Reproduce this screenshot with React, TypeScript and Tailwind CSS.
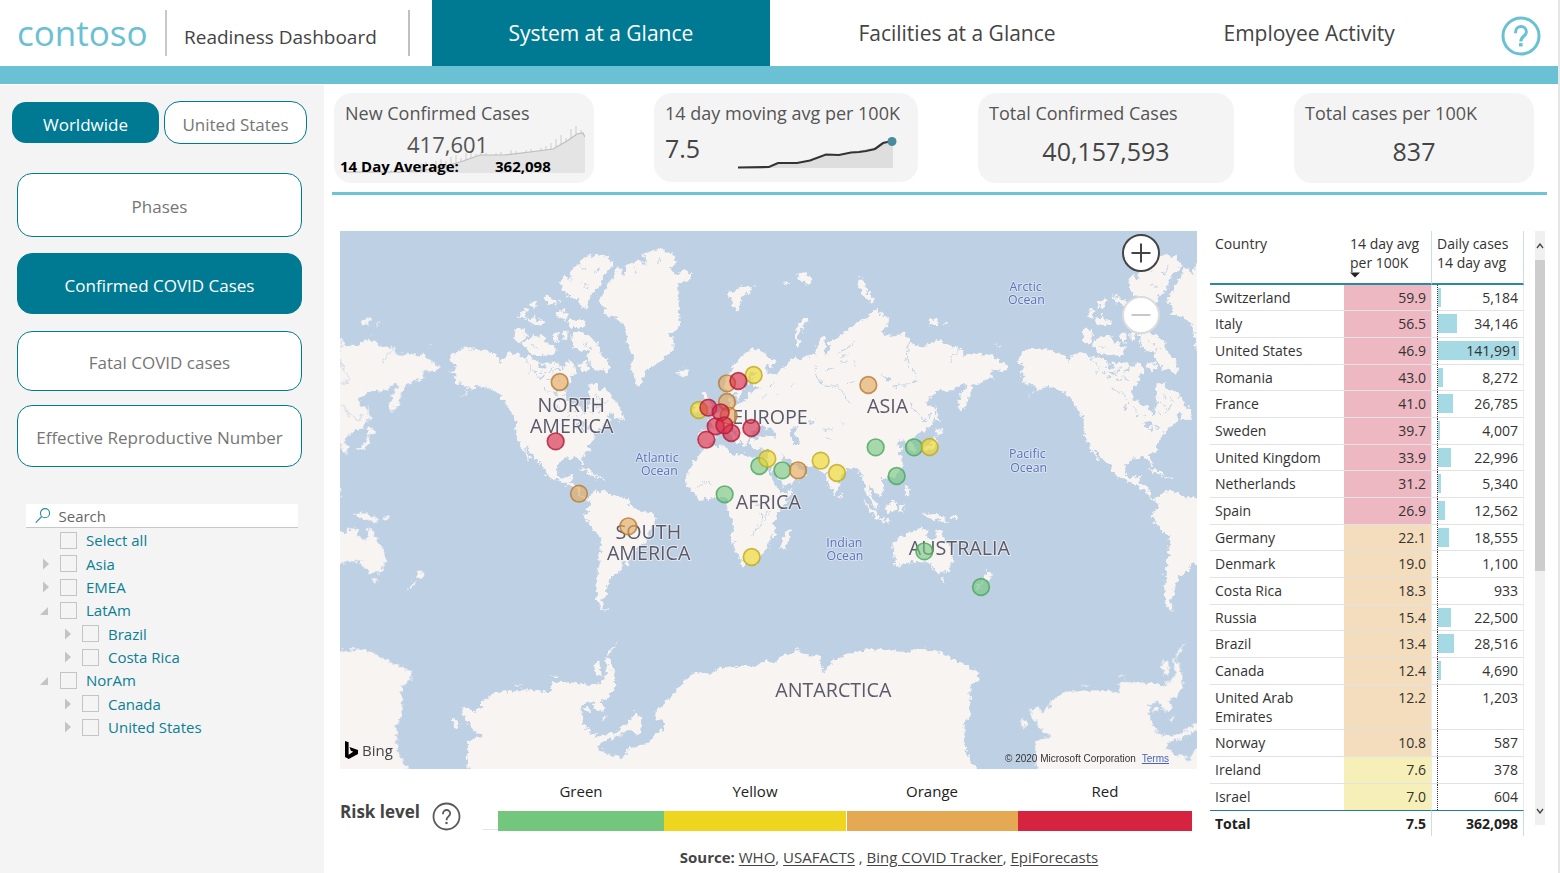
import React, { useState } from "react";

const NAV = [
  { label: "System at a Glance", grow: "flex-[338]" },
  { label: "Facilities at a Glance", grow: "flex-[375]" },
  { label: "Employee Activity", grow: "flex-[330]" },
];

const METRICS = [
  { label: "Phases", height: "h-[64px]" },
  { label: "Confirmed COVID Cases", height: "h-[61px]" },
  { label: "Fatal COVID cases", height: "h-[60px]" },
  { label: "Effective Reproductive Number", height: "h-[62px]" },
];
const METRIC_GAPS = ["", "mt-[16px]", "mt-[17px]", "mt-[14px]"];

type Node = { label: string; level: 0 | 1; state?: "open" | "closed" };
const REGIONS: Node[] = [
  { label: "Select all", level: 0 },
  { label: "Asia", level: 0, state: "closed" },
  { label: "EMEA", level: 0, state: "closed" },
  { label: "LatAm", level: 0, state: "open" },
  { label: "Brazil", level: 1, state: "closed" },
  { label: "Costa Rica", level: 1, state: "closed" },
  { label: "NorAm", level: 0, state: "open" },
  { label: "Canada", level: 1, state: "closed" },
  { label: "United States", level: 1, state: "closed" },
];

const COUNTRIES: [string, string, number][] = [
  ["Switzerland", "59.9", 5184],
  ["Italy", "56.5", 34146],
  ["United States", "46.9", 141991],
  ["Romania", "43.0", 8272],
  ["France", "41.0", 26785],
  ["Sweden", "39.7", 4007],
  ["United Kingdom", "33.9", 22996],
  ["Netherlands", "31.2", 5340],
  ["Spain", "26.9", 12562],
  ["Germany", "22.1", 18555],
  ["Denmark", "19.0", 1100],
  ["Costa Rica", "18.3", 933],
  ["Russia", "15.4", 22500],
  ["Brazil", "13.4", 28516],
  ["Canada", "12.4", 4690],
  ["United Arab Emirates", "12.2", 1203],
  ["Norway", "10.8", 587],
  ["Ireland", "7.6", 378],
  ["Israel", "7.0", 604],
];
const MAX_CASES = 141991;

function heat(avg: string) {
  const v = parseFloat(avg);
  if (v > 25) return "bg-[#eeb8c3]";
  if (v > 10) return "bg-[#f4ddbd]";
  return "bg-[#f6f0b8]";
}

/* Coastlines are drawn in map units; each group carries the origin of its sheet. */
const AMERICAS = [
  "330,380 350,362 375,352 410,356 440,362 475,380 480,398 500,370 525,366 550,385 570,378 590,392 620,400 650,395 672,412 685,392 700,400 706,425 695,438 690,452 671,480 673,505 700,520 722,528 728,552 738,555 740,530 752,518 745,490 748,458 770,462 778,482 795,475 815,500 838,530 830,548 800,552 812,570 800,580 780,592 765,612 758,628 742,645 750,658 738,664 724,676 727,690 735,706 728,706 718,688 700,682 668,686 652,705 650,728 662,746 682,740 698,732 694,752 686,758 708,762 724,778 726,798 742,806 752,800 760,786 790,780 830,797 862,806 872,825 900,842 940,853 946,870 926,905 915,938 880,962 866,998 842,1000 845,1018 822,1034 810,1036 808,1055 795,1076 800,1088 785,1110 790,1126 798,1145 780,1130 770,1110 768,1060 775,1000 783,935 778,915 750,890 733,855 745,835 750,815 730,808 716,790 708,774 690,770 655,750 622,737 605,705 580,684 562,656 552,650 572,690 568,690 545,652 530,625 526,575 524,558 505,535 490,510 475,490 450,475 415,468 395,474 372,492 350,505 385,480 386,470 360,458 345,455 340,440 350,430 328,425 352,410 332,396",
  "860,105 850,135 832,105 822,130 800,170 775,215 795,235 785,252 830,262 855,290 865,350 878,385 870,410 880,440 888,462 905,466 912,430 935,408 970,385 1000,360 1000,330 985,310 1020,290 1015,240 1015,190 1010,160 1040,150 1057,128 1035,120 1010,130 985,115 1010,95 995,70 960,52 930,62 905,72 925,95 890,88",
  "820,100 800,78 765,73 730,85 700,110 690,125 690,150 672,130 658,155 668,180 690,205 712,205 722,232 742,235 750,200 770,180 790,140",
  "535,262 555,232 562,238 548,262",
  "552,260 575,264 582,250 590,268 612,272 605,286 570,282",
  "612,195 640,205 658,215 650,224 622,218",
  "568,215 595,208 588,228 572,232",
  "645,250 670,235 682,258 670,268 655,262",
  "682,270 735,268 735,290 690,290",
  "525,295 545,295 562,310 540,340 522,332",
  "548,338 575,318 605,315 625,340 650,355 640,374 600,378 570,368",
  "632,312 655,305 652,338 640,330",
  "664,305 682,302 680,328 668,330",
  "690,312 722,305 748,318 770,338 778,365 800,388 812,415 800,432 780,415 764,420 745,395 740,362 700,355",
  "712,400 738,395 748,415 730,425",
  "812,540 838,535 850,552 850,570 822,565",
  "1008,428 1025,415 1045,418 1043,430 1025,440",
  "718,712 745,718 770,735 760,736 735,724",
  "770,740 795,742 792,748 772,746",
];
const SVALBARD = [
  "1165,180 1190,184 1200,170 1240,168 1235,185 1208,192 1200,215 1190,245 1180,225 1170,205",
];
const EURASIA = [
  "130,205 140,175 155,145 180,110 205,90 235,83 250,98 285,120 280,140 258,132 262,160 285,165 300,150 320,130 345,108 358,120 378,110 405,100 415,60 425,44 436,60 432,108 448,92 444,62 470,55 500,30 520,15 562,-10 586,-38 600,-20 626,0 622,18 595,38 630,46 668,40 690,60 702,78 740,75 770,55 800,74 845,84 850,104 895,100 940,105 960,125 985,140 970,155 930,150 940,175 900,185 875,200 868,222 860,250 842,278 832,250 840,220 862,195 845,190 820,210 770,212 742,236 738,252 760,262 768,290 752,320 730,332 705,348 694,366 708,380 702,402 686,384 675,362 655,360 650,375 672,386 656,396 668,420 665,445 640,470 612,470 602,480 612,500 605,520 590,526 575,500 566,498 570,525 588,548 592,568 575,552 558,515 558,500 546,472 535,450 520,440 500,450 480,475 474,508 462,526 450,505 440,470 430,450 412,448 400,440 375,436 350,430 330,425 300,402 312,424 330,440 345,436 376,455 365,475 330,490 305,500 295,480 275,450 265,430 262,410 265,385 240,388 215,385 205,374 208,360 228,354 258,348 290,352 282,334 262,325 240,318 225,330 208,348 198,358 196,384 184,366 174,345 156,322 152,332 165,345 184,362 172,374 152,345 136,332 115,335 105,348 95,370 75,382 60,375 55,345 62,330 95,326 97,306 80,298 105,285 125,270 140,260 148,252 146,235 160,228 160,255 185,250 200,235 206,215 245,204 215,198 208,185 226,160 216,150 200,175 190,192 188,215 170,238 162,212 145,218",
  "80,378 110,377 140,374 146,395 175,410 190,400 215,412 262,415 262,430 258,440 270,465 290,500 305,516 336,512 330,530 305,560 285,585 280,610 288,640 265,660 260,685 240,710 225,735 185,738 175,705 158,670 152,645 160,620 155,595 140,575 145,545 130,530 100,530 60,540 40,520 20,500 17,470 30,435 55,410 65,390",
  "66,220 82,222 86,245 100,270 98,282 72,285 82,265 72,248",
  "40,255 62,250 62,275 42,278",
  "330,625 326,660 315,688 302,682 305,652 318,638",
  "476,522 484,530 480,536",
  "548,540 568,555 590,578 600,597 585,592 568,568",
  "600,596 632,600 630,605 600,602",
  "614,560 640,540 652,548 642,576 620,578",
  "656,556 676,552 665,562 670,580 658,576",
  "673,492 683,498 680,512 690,530 678,524",
  "766,322 792,332 776,346 766,344",
  "768,346 774,366 756,386 734,392 728,386 752,372",
  "766,250 776,290 778,305 768,300",
  "382,-8 365,0 350,22 342,45 348,82 360,78 352,55 364,22 388,-2",
  "535,-130 550,-128 552,-105 570,-75 585,-58 572,-52 550,-75 532,-102",
  "745,-2 772,-6 770,14 748,14",
  "790,5 806,15 794,14",
  "945,72 958,72 956,78",
  "306,-115 330,-118 326,-108",
  "350,-140 378,-145 400,-118 380,-110 352,-125",
];
const OCEANIA = [
  "365,130 395,110 410,98 430,95 450,84 470,88 465,105 485,120 495,110 500,80 512,100 525,120 545,150 548,180 535,215 500,218 485,200 478,188 460,185 430,185 400,190 378,200 370,170",
  "452,35 470,40 490,38 515,50 532,68 505,60 485,58 465,48",
  "510,234 526,234 518,252",
  "650,208 668,225 652,240 644,232",
  "643,240 630,262 612,272 622,255",
  "540,50 558,45 562,52 545,58",
];
const ANTARCTICA = [
  "390,900 380,740 390,720 428,705 400,690 370,650 365,625 385,620 400,635 425,622 425,600 470,575 520,570 600,570 632,578 635,545 680,545 720,550 760,555 790,540 800,520 795,470 808,480 822,520 822,560 805,590 780,600 790,620 785,635 765,630 755,605 722,612 728,670 760,705 800,705 840,685 865,665 885,632 905,655 908,680 895,702 860,690 830,710 780,725 772,740 800,762 832,768 840,780 870,740 910,735 960,690 972,695 970,665 945,655 945,635 980,600 1020,555 1065,515 1115,520 1140,500 1230,500 1280,480 1300,490 1320,470 1355,460 1370,445 1390,462 1442,470 1438,495 1453,515 1480,480 1530,458 1590,445 1690,455 1750,445 1810,460 1850,485 1890,500 1918,515 1915,540 1887,560 1890,650 1872,670 1875,740 1890,780 1910,810 1910,900",
  "340,652 355,665 352,682 336,672",
  "515,545 530,555 550,556 530,560",
  "630,524 655,528 640,532",
  "768,480 780,485 784,530 770,525 760,500",
  "735,618 752,622 748,636 734,632",
  "800,470 812,445 835,420 825,435 805,472",
  "782,660 800,645 792,660",
];
const LAKES = [
  "330,320 352,322 342,340 356,352 356,374 340,375 332,345",
  "385,305 402,300 396,315",
  "605,158 628,178 618,184",
  "238,575 246,590 240,598",
  "228,548 236,552 232,560",
  "290,120 300,128 296,140",
];
const AMERICAN_LAKES = [
  "702,582 722,572 738,584 722,588",
  "722,592 728,610 734,592",
  "738,588 752,594 744,602",
  "592,440 612,436 606,444",
  "590,408 610,400 618,414 600,416",
  "640,425 660,410 664,418",
  "650,520 656,540 648,542",
];
const RIVERS = [
  "M405,138 q-6,40 30,56 q40,0 60,30 l12,24",
  "M690,60 q-20,40 -6,70 q30,40 26,50 q-30,20 -50,12 l-32,14",
  "M845,84 q-30,20 -34,44",
  "M690,250 q20,40 50,50 l12,-20",
  "M268,570 l-24,40 l-30,34",
  "M50,505 l20,-22 l20,6",
  "M480,110 l24,-10 M440,150 l20,-8 M520,120 l10,18 M500,190 l20,-6",
  "M430,330 l24,-6 M440,352 l18,6 M480,300 l12,10",
  "M470,100 l30,-16 l20,-20 M480,128 l20,-6 M265,200 l14,-12 M285,215 l10,12 M330,200 l8,-12 M250,228 l10,-8",
];

type Risk = "g" | "y" | "o" | "r";
const RISK_FILL: Record<Risk, string> = { g: "#74c77e", y: "#eed724", o: "#e4a95a", r: "#d62542" };
const RISK_STROKE: Record<Risk, string> = { g: "#4ba65c", y: "#bfa91c", o: "#b77b33", r: "#b01c36" };
const MARKERS: [number, number, Risk][] = [
  [658, 455, "o"], [646, 633, "r"], [716, 790, "o"], [864, 888, "o"],
  [1160, 459, "o"], [1240, 434, "y"], [1194, 452, "r"], [1160, 515, "o"],
  [1076, 539, "y"], [1165, 556, "o"], [1104, 532, "r"], [1141, 546, "r"],
  [1126, 588, "r"], [1173, 608, "r"], [1152, 585, "r"], [1098, 628, "r"],
  [1233, 593, "r"], [1257, 707, "g"], [1281, 685, "y"], [1153, 792, "g"],
  [1234, 980, "y"], [1326, 720, "g"], [1373, 720, "o"], [1441, 691, "y"],
  [1490, 728, "y"], [1584, 464, "o"], [1606, 651, "g"], [1721, 651, "g"],
  [1768, 650, "y"], [1669, 737, "g"], [1752, 963, "g"], [1922, 1070, "g"],
];
const LAND_LABELS: [string, number, number][] = [
  ["NORTH", 694, 547], ["AMERICA", 695, 610], ["SOUTH", 925, 928], ["AMERICA", 926, 990],
  ["EUROPE", 1290, 583], ["ASIA", 1643, 550], ["AFRICA", 1285, 836],
  ["AUSTRALIA", 1858, 974], ["ANTARCTICA", 1480, 1400],
];
const SEA_LABELS: [string, number, number, number][] = [
  ["Atlantic", 951, 958, 695],
  ["Arctic", 2057, 2059, 182],
  ["Pacific", 2062, 2066, 685],
  ["Indian", 1513, 1515, 950],
];

function Land({ shapes }: { shapes: string[] }) {
  return (
    <>
      {shapes.map((points, i) => (
        <polygon key={i} points={points} />
      ))}
    </>
  );
}

function WorldMap() {
  return (
    <svg viewBox="0 3 2571 1614" preserveAspectRatio="xMidYMid slice" className="block w-full" role="img" aria-label="World map of cases by country">
      <defs>
        <filter id="coast" x="0" y="0" width="2571" height="1700" filterUnits="userSpaceOnUse">
          <feTurbulence type="fractalNoise" baseFrequency="0.07" numOctaves="3" seed="4" result="n" />
          <feDisplacementMap in="SourceGraphic" in2="n" scale="24" xChannelSelector="R" yChannelSelector="G" />
        </filter>
        <g id="world">
          <g fill="#f7f4f2">
            <Land shapes={AMERICAS} />
            <Land shapes={SVALBARD} />
            <g transform="translate(1020 270)"><Land shapes={EURASIA} /></g>
            <g transform="translate(1290 810)"><Land shapes={OCEANIA} /></g>
            <g transform="translate(0 810)"><Land shapes={ANTARCTICA} /></g>
          </g>
          <g fill="#bdd0e4">
            <Land shapes={AMERICAN_LAKES} />
            <g transform="translate(1020 270)"><Land shapes={LAKES} /></g>
          </g>
          <g fill="none" stroke="#bdd0e4" strokeWidth="3">
            <g transform="translate(1020 270)">
              {RIVERS.map((d) => <path key={d} d={d} />)}
            </g>
            <path d="M560,395 l14,20 l-10,14 M590,380 l10,24 M625,430 l14,-20 M610,470 l20,14 M640,480 l12,20 M760,520 l20,14 M765,490 l10,20 M790,520 l-14,26 M700,545 l10,16 M570,345 l24,8 M715,100 l16,22 M780,110 l-18,24 M725,160 l20,10 M905,85 l12,24 M960,80 l-12,24 M880,110 l8,22" />
            <path d="M600,425 l24,4 M622,448 l20,-4 M580,420 l10,16 M648,440 l16,10 M655,505 l10,14 M672,530 l12,12 M690,550 l-8,12 M750,545 l12,10 M785,500 l12,14 M550,310 l8,20 M720,330 l20,14 M755,350 l-14,12" />
          </g>
        </g>
      </defs>
      <rect y="0" width="2571" height="1700" fill="#bdd0e4" />
      <g filter="url(#coast)">
        <rect y="0" width="2571" height="1700" fill="#bdd0e4" />
        <use href="#world" x="1" y="1" />
        <use href="#world" x="-1703" y="1" />
        <use href="#world" x="1705" y="1" />
      </g>
      <g textAnchor="middle" paintOrder="stroke" stroke="#f7f4f2" strokeOpacity="0.7" strokeLinejoin="round" style={{ fontFamily: '"Open Sans", sans-serif' }}>
        <g fontSize="59" fill="#5a5a6a" strokeWidth="6">
          {LAND_LABELS.map(([t, x, y]) => <text key={t + y} x={x} y={y}>{t}</text>)}
        </g>
        <g fontSize="37" fill="#5774c4" strokeWidth="6" strokeOpacity="0.5">
          {SEA_LABELS.map(([t, x1, x2, y]) => (
            <text key={t}>
              <tspan x={x1} y={y}>{t}</tspan>
              <tspan x={x2} dy="40">Ocean</tspan>
            </text>
          ))}
        </g>
      </g>
      {MARKERS.map(([x, y, risk]) => (
        <circle key={`${x}-${y}`} cx={x + 1} cy={y + 1} r="25" fill={RISK_FILL[risk]} fillOpacity="0.62" stroke={RISK_STROKE[risk]} strokeOpacity="0.8" strokeWidth="5" />
      ))}
    </svg>
  );
}

function Header() {
  const [tab, setTab] = useState(0);
  return (
    <header className="border-b-[18px] border-[#69c1d3]">
      <div className="flex h-[66px]">
        <div className="flex w-[432px] shrink-0 pt-[10px] pl-[17px]">
          <div className="flex h-[46px] w-[150px] items-center border-r-2 border-[#c8c8c8] text-[35px] text-[#69c1d3]">contoso</div>
          <h1 className="flex h-[46px] w-[243px] items-center border-r-2 border-[#c0c0c0] pt-[9px] pl-[17px] text-[19px] text-[#444]">Readiness Dashboard</h1>
        </div>
        <nav className="flex flex-1">
          {NAV.map((n, i) => (
            <button key={n.label} onClick={() => setTab(i)} className={`${n.grow} pt-[2px] text-[21px] ${i === tab ? "bg-[#007a92] text-white" : "text-[#444]"}`}>
              {n.label}
            </button>
          ))}
        </nav>
        <button aria-label="Help" className="w-[84px] pl-[27px]">
          <svg width="40" height="40" viewBox="0 0 40 40" className="mt-[5px]" fill="none" stroke="#69c1d3">
            <circle cx="20" cy="20" r="18" strokeWidth="3" />
            <path d="M14.6 17.2v-1.2a5.4 5.4 0 0 1 10.8 0c0 3.9-5.6 4.3-5.6 9.5" strokeWidth="3" />
            <path d="M18 28.8h3.6" strokeWidth="3.4" />
          </svg>
        </button>
      </div>
    </header>
  );
}

function Sidebar() {
  const [scope, setScope] = useState("Worldwide");
  const [metric, setMetric] = useState(1);
  return (
    <aside className="mt-px w-[324px] shrink-0 bg-[#f4f4f4] pt-[16px]">
      <div className="flex items-center gap-[5px] pl-[12px]">
        {["Worldwide", "United States"].map((s) => (
          <button key={s} onClick={() => setScope(s)} className={s === scope ? "h-[41px] w-[147px] rounded-[14px] bg-[#007a92] pt-[4px] text-[17px] font-medium text-white" : "h-[43px] w-[143px] rounded-[16px] border border-[#007a92] bg-white pt-[4px] text-[17px] text-[#767676]"}>
            {s}
          </button>
        ))}
      </div>
      <div className="mt-[29px] flex flex-col pl-[17px]">
        {METRICS.map((m, i) => (
          <button key={m.label} onClick={() => setMetric(i)} className={`${m.height} ${METRIC_GAPS[i]} w-[285px] rounded-[15px] border border-[#007a92] pt-[4px] text-[17px] ${i === metric ? "bg-[#007a92] text-white" : "bg-white text-[#767676]"}`}>
            {m.label}
          </button>
        ))}
      </div>
      <label className="mt-[37px] ml-[26px] flex h-[24px] w-[272px] items-center border-b border-[#c8c8c8] bg-white pl-[9px]">
        <svg width="17" height="17" viewBox="0 0 17 17" fill="none" stroke="#2a8ba0" strokeWidth="1.2" aria-hidden="true">
          <circle cx="11" cy="6" r="5" />
          <path d="M7.4 9.6L0.8 16.2" />
        </svg>
        <input type="text" placeholder="Search" aria-label="Search" className="ml-[8px] w-full bg-transparent pt-px text-[15px] text-[#555] outline-none placeholder:text-[#666]" />
      </label>
      <ul className="mt-px grid h-[210px] auto-rows-fr">
        {REGIONS.map((r) => (
          <li key={r.label + r.level} className={`flex items-center ${r.level ? "pl-[61px]" : "pl-[39px]"}`}>
            {r.state ? (
              <button aria-label={`Toggle ${r.label}`} className="w-[21px]">
                <svg width="12" height="12" viewBox="0 0 12 12" fill="#c4c4c4">
                  {r.state === "open" ? <path d="M1 10L9 2v8z" /> : <path d="M4 0.5l6 5.5-6 5.5z" />}
                </svg>
              </button>
            ) : (
              <span className="w-[21px]" />
            )}
            <label className="flex items-center text-[15px] text-[#0b7f95]">
              <input type="checkbox" className="mr-[9px] size-[17px] appearance-none border border-[#c4c4c4] checked:bg-[#007a92]" />
              {r.label}
            </label>
          </li>
        ))}
      </ul>
    </aside>
  );
}

const CASE_BARS = [1, 1, 1, 1, 1, 1, 1, 2, 2, 3, 6, 9, 10, 9, 8, 10, 11, 9, 12, 14, 12, 16, 18, 15, 20, 22, 19, 21, 20, 18, 20, 21, 19, 23, 22, 20, 23, 24, 22, 25, 27, 30, 34, 38, 35, 44, 47, 43];

function Stats() {
  return (
    <div className="flex justify-between pt-[9px] pr-[24px] pl-[10px]">
      <section className="relative h-[90px] w-[260px] rounded-[18px] bg-[#f4f4f4] pt-[8px] pl-[6px]">
        <svg viewBox="0 0 240 48" className="absolute right-[9px] bottom-[10px] h-[48px] w-[240px]" aria-hidden="true">
          <g fill="#e0e0e0">
            {CASE_BARS.map((h, i) => <rect key={i} x={i * 5} y={48 - h} width="2" height={h} />)}
          </g>
          <path d="M0 48V47L55 47L80 45L105 40L118 36L135 30L160 30L185 27L208 24L222 16L232 9L238 8L240 12V48z" fill="#e4e4e4" />
          <path d="M0 47L55 47L80 45L105 40L118 36L135 30L160 30L185 27L208 24L222 16L232 9L238 8L240 12" fill="none" stroke="#bdbdbd" strokeWidth="1.2" />
        </svg>
        <h2 className="relative pl-[5px] text-[18px] leading-[24px] text-[#555]">New Confirmed Cases</h2>
        <p className="relative mt-[6px] pl-[67px] text-[22px] leading-[26px] text-[#555]">417,601</p>
        <p className="relative flex text-[15px] leading-[18px] font-bold text-black">
          <span className="w-[155px] whitespace-nowrap">14 Day Average:</span>
          <span>362,098</span>
        </p>
      </section>
      <section className="h-[89px] w-[264px] rounded-[18px] bg-[#f4f4f4] pt-[8px] pl-[11px]">
        <h2 className="text-[18px] leading-[24px] whitespace-nowrap text-[#555]">14 day moving avg per 100K</h2>
        <div className="flex">
          <p className="w-[72px] pt-[7px] text-[25px] leading-[32px] text-[#444]">7.5</p>
          <svg width="162" height="40" viewBox="0 0 162 40" className="mt-[6px]" aria-hidden="true">
            <path d="M1 37H33L42 32H62L75 29L91 23L102 24L118 21L125 19L140 16L148 12L156 10V37z" fill="#dedede" />
            <path d="M1 36.5L32 36L41 32L60 32L73 29.500L89 23.500L102 24L114 21.500L122 21L129 20L138 18L146 12L155 10" fill="none" stroke="#333" strokeWidth="2.2" />
            <circle cx="155" cy="10.500" r="4.500" fill="#468c9c" />
          </svg>
        </div>
      </section>
      <section className="h-[90px] w-[256px] rounded-[18px] bg-[#f4f4f4] pt-[8px]">
        <h2 className="pl-[11px] text-[18px] leading-[24px] text-[#555]">Total Confirmed Cases</h2>
        <p className="mt-[10px] text-center text-[25px] leading-[32px] text-[#444]">40,157,593</p>
      </section>
      <section className="h-[90px] w-[240px] rounded-[18px] bg-[#f4f4f4] pt-[8px]">
        <h2 className="pl-[11px] text-[18px] leading-[24px] text-[#555]">Total cases per 100K</h2>
        <p className="mt-[10px] text-center text-[25px] leading-[32px] text-[#444]">837</p>
      </section>
    </div>
  );
}

function CaseTable() {
  return (
    <table className="w-[314px] table-fixed border-separate border-spacing-0 self-start text-[14px] leading-[19px] text-[#333]">
      <thead>
        <tr className="h-[54px] text-left align-top *:border-b-2 *:border-b-[#2a8ba0] *:pt-[3px] *:font-normal *:whitespace-nowrap">
          <th className="w-[134px] pl-[5px]">Country</th>
          <th className="w-[88px] border-r border-r-[#c9dfe5] pl-[6px]">
            14 day avg<br />per 100K
            <svg width="10" height="6" viewBox="0 0 10 6" className="block" aria-hidden="true"><path d="M0 0.500h10L5 5.500z" fill="#222" /></svg>
          </th>
          <th className="w-[92px] border-r border-r-[#c9dfe5] pl-[5px]">Daily cases<br />14 day avg</th>
        </tr>
      </thead>
      <tbody>
        {COUNTRIES.map(([name, avg, cases]) => (
          <tr key={name} className="h-[27px] align-top *:border-b *:border-b-[#e2e2e2] nth-[3n+1]:h-[26px] last:h-[25px] last:*:border-b-0">
            <td className="pt-[3px] pb-[3px] pl-[5px]">{name}</td>
            <td className={`border-r border-r-[#e4eef1] pt-[3px] pr-[5px] text-right ${heat(avg)}`}>{avg}</td>
            <td className="h-px border-r border-r-[#e4eef1] pl-[5px]">
              <div className="grid h-full items-start border-l border-dotted border-[#333] pt-[3px]">
                <span className="col-start-1 row-start-1 h-[19px]">
                  <span className="block h-full w-[81px]">
                    <span className="block h-full bg-[#a5d9e3]" style={{ width: `${cases > 1500 ? (cases / MAX_CASES) * 100 : 0}%` }} />
                  </span>
                </span>
                <span className="col-start-1 row-start-1 pr-[5px] text-right">{cases.toLocaleString("en-US")}</span>
              </div>
            </td>
          </tr>
        ))}
      </tbody>
      <tfoot>
        <tr className="font-bold text-[#222] *:border-t *:border-t-[#1a8196] *:py-[3px]">
          <td className="pl-[5px]">Total</td>
          <td className="border-r border-r-[#c9dfe5] pr-[5px] text-right">7.5</td>
          <td className="border-r border-r-[#c9dfe5] pr-[5px] text-right">362,098</td>
        </tr>
      </tfoot>
    </table>
  );
}

function Scrollbar() {
  return (
    <div className="flex h-[594px] w-[10px] flex-col bg-[#f0f0f0]">
      <button aria-label="Scroll up" className="flex h-[29px] items-center justify-center">
        <svg width="8" height="6" viewBox="0 0 8 6" fill="none" stroke="#444" strokeWidth="1.3"><path d="M1 5l3-4 3 4" /></svg>
      </button>
      <div className="h-[311px] bg-[#cdcdcd]" />
      <button aria-label="Scroll down" className="mt-auto flex h-[29px] items-center justify-center">
        <svg width="8" height="6" viewBox="0 0 8 6" fill="none" stroke="#444" strokeWidth="1.3"><path d="M1 1l3 4 3-4" /></svg>
      </button>
    </div>
  );
}

const LEGEND = [
  { label: "Green", bar: "bg-[#72c77c]", grow: "flex-[166]" },
  { label: "Yellow", bar: "bg-[#eed620]", grow: "flex-[182]" },
  { label: "Orange", bar: "bg-[#e5a953] border-l border-white", grow: "flex-[172]" },
  { label: "Red", bar: "bg-[#d62440]", grow: "flex-[174]" },
];

function Legend() {
  return (
    <div className="flex pt-[12px] pr-[5px]">
      <div className="flex w-[143px] items-start pt-[19px] text-[#444]">
        <span className="text-[17px] leading-[24px] font-bold whitespace-nowrap">Risk level</span>
        <button aria-label="About risk levels" className="mt-[2px] ml-[12px]">
          <svg width="29" height="29" viewBox="0 0 29 29" fill="none" stroke="#5a5a5a" strokeWidth="1.8">
            <circle cx="14.500" cy="14.500" r="13" />
            <path d="M11 12.200v-.6a3.600 3.600 0 0 1 7.200 0c0 2.800-3.700 3-3.700 6.600" />
            <path d="M13.400 21h2.200" strokeWidth="2.2" />
          </svg>
        </button>
      </div>
      <div className="mb-px w-[15px] border-b border-[#e4e4e4]" />
      <div className="flex flex-1">
        {LEGEND.map((l) => (
          <div key={l.label} className={`${l.grow} text-center text-[15px] leading-[20px] text-[#222]`}>
            {l.label}
            <div className={`mt-[10px] h-[20px] ${l.bar}`} />
          </div>
        ))}
      </div>
    </div>
  );
}

const SOURCE_LINK = "text-[#444] underline underline-offset-2";

export default function App() {
  return (
    <div className="min-h-screen overflow-hidden border-r-2 border-[#e6e6e6] bg-white font-['Open_Sans',sans-serif]">
      <div className="flex min-h-screen flex-col">
        <Header />
        <div className="flex flex-1">
          <Sidebar />
          <main className="min-w-0 flex-1">
            <Stats />
            <div className="mt-[9px] mr-[11px] ml-[8px] h-[3px] bg-[#6cc5d6]" />
            <div className="flex pt-[36px] pr-[13px] pl-[16px]">
              <div className="mr-[13px] min-w-0 flex-1">
                <div className="relative">
                  <WorldMap />
                  <button aria-label="Zoom in" className="absolute top-[3px] right-[37px] flex size-[38px] items-center justify-center rounded-full border-2 border-[#444] bg-white">
                    <svg width="20" height="20" viewBox="0 0 20 20" stroke="#444" strokeWidth="2"><path d="M0.500 10h19M10 0.500v19" /></svg>
                  </button>
                  <button aria-label="Zoom out" disabled className="absolute top-[65px] right-[37px] flex size-[38px] items-center justify-center rounded-full border-2 border-[#dcdcdc] bg-white">
                    <svg width="20" height="20" viewBox="0 0 20 20" stroke="#c8c8c8" strokeWidth="2"><path d="M0.500 10h19" /></svg>
                  </button>
                  <div className="absolute bottom-[8px] left-[5px] flex items-center gap-[4px] text-[15px] leading-[22px] text-[#444]">
                    <svg width="13" height="18" viewBox="0 0 13 18" fill="#000"><path d="M0 0l3.600 1.300v12.400l4.600-2.900-2.300-1.100L4.500 6 13 9v4L3.700 18 0 16z" /></svg>
                    Bing
                  </div>
                  <div className="absolute right-[28px] bottom-[4px] flex gap-[6px] font-['Liberation_Sans',sans-serif] text-[10px] leading-[13px] text-[#333]">
                    <span>© 2020 Microsoft Corporation</span>
                    <a href="#terms" className="text-[#4a64b8] underline">Terms</a>
                  </div>
                </div>
                <Legend />
                <p className="mt-[16px] pl-[241px] text-center text-[15px] leading-[20px] whitespace-nowrap text-[#444]">
                  <b>Source:</b> <a href="#who" className={SOURCE_LINK}>WHO</a>, <a href="#usafacts" className={SOURCE_LINK}>USAFACTS</a> , <a href="#bing" className={SOURCE_LINK}>Bing COVID Tracker</a>, <a href="#epi" className={SOURCE_LINK}>EpiForecasts</a>
                </p>
              </div>
              <CaseTable />
              <div className="w-[11px]" />
              <Scrollbar />
            </div>
          </main>
        </div>
      </div>
    </div>
  );
}
